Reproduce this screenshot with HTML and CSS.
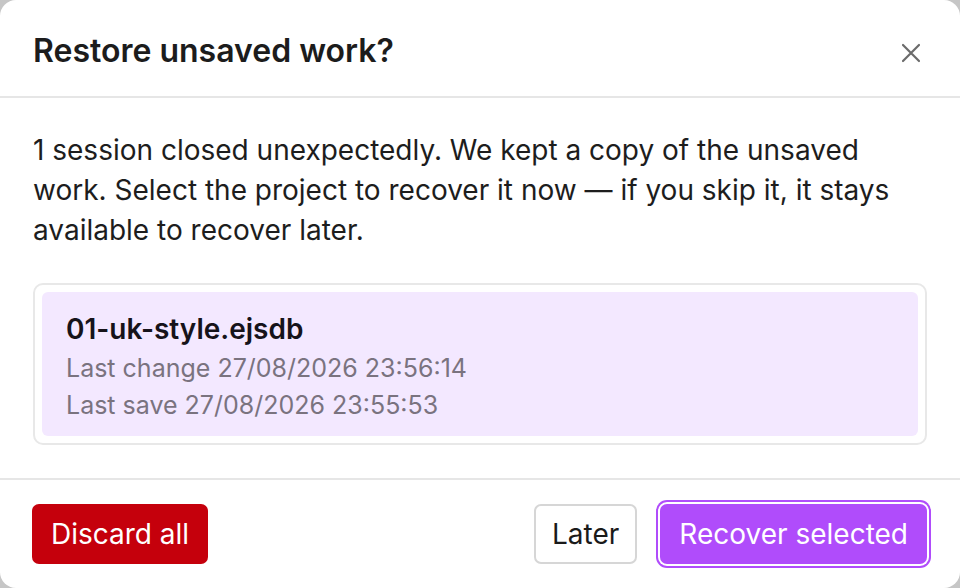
FILE: index.html
```html
<!DOCTYPE html>
<html lang="en">
<head>
<meta charset="utf-8">
<title>Restore unsaved work?</title>
<link rel="stylesheet" href="styles.css">
</head>
<body>
<div class="dialog">
  <header class="dlg-header">
    <h1 class="dlg-title">Restore unsaved work?</h1>
    <button class="close-btn" aria-label="Close">
      <svg width="22" height="22" viewBox="0 0 22 22"><path d="M3 3L19 19M19 3L3 19" stroke="#6b6b6b" stroke-width="2.2" stroke-linecap="round" fill="none"/></svg>
    </button>
  </header>
  <section class="dlg-body">
    <p class="dlg-text">1 session closed unexpectedly. We kept a copy of the unsaved work. Select the project to recover it now — if you skip it, it stays available to recover later.</p>
    <div class="list">
      <div class="item">
        <div class="item-name">01-uk-style.ejsdb</div>
        <div class="item-meta">Last change 27/08/2026 23:56:14</div>
        <div class="item-meta">Last save 27/08/2026 23:55:53</div>
      </div>
    </div>
  </section>
  <footer class="dlg-footer">
    <button class="btn btn-danger">Discard all</button>
    <div class="spacer"></div>
    <button class="btn btn-plain">Later</button>
    <button class="btn btn-primary">Recover selected</button>
  </footer>
</div>
</body>
</html>
```
FILE: styles.css
```css
html, body {
  margin: 0;
  padding: 0;
  background: #c6c6c6;
}
body {
  font-family: "Inter", "Noto Sans", sans-serif;
  color: #1a1a1a;
}
.dialog {
  width: 960px;
  height: 588px;
  background: #ffffff;
  border-radius: 16px;
  display: flex;
  flex-direction: column;
  overflow: hidden;
}
.dlg-header {
  height: 98px;
  box-sizing: border-box;
  border-bottom: 2px solid #e6e6e6;
  display: flex;
  align-items: center;
  padding: 5px 38px 0 33px;
  flex-shrink: 0;
}
.dlg-title {
  margin: 0;
  font-size: 32px;
  line-height: 40px;
  font-weight: 600;
  flex: 1;
  color: #1c1c1c;
}
.close-btn {
  border: 0;
  background: transparent;
  padding: 0;
  width: 22px;
  height: 22px;
  display: flex;
  margin-top: 4px;
}
.dlg-body {
  padding: 32px 33px 33px 33px;
  border-bottom: 2px solid #e6e6e6;
}
.dlg-text {
  margin: 0 0 33px 0;
  font-size: 28px;
  line-height: 40px;
  color: #1d1d1d;
}
.list {
  border: 2px solid #e8e8e8;
  border-radius: 10px;
  padding: 7px;
}
.item {
  background: #f3e8ff;
  border-radius: 6px;
  padding: 16px 24px 12px 24px;
}
.item-name {
  font-size: 28px;
  font-weight: 600;
  line-height: 42px;
  color: #16131a;
}
.item-meta {
  font-size: 25px;
  line-height: 37px;
  color: #7a737f;
}
.dlg-footer {
  flex: 1;
  display: flex;
  align-items: center;
  padding: 0 31px 0 32px;
}
.spacer { flex: 1; }
.btn {
  font-family: "Inter", "Noto Sans", sans-serif;
  font-size: 28px;
  height: 60px;
  border-radius: 7px;
  padding: 0 17px;
  border: 2px solid transparent;
  background: #fff;
  color: #1a1a1a;
}
.btn-danger {
  background: #c5000c;
  color: #ffffff;
}
.btn-plain {
  border-color: #d6d6d6;
  padding: 0 16px;
  margin-right: 23px;
}
.btn-primary {
  background: #b04cfb;
  color: #ffffff;
  padding: 0 17px;
  box-shadow: 0 0 0 2px #ffffff, 0 0 0 4px #b04cfb;
  margin-right: 2px;
}
```
